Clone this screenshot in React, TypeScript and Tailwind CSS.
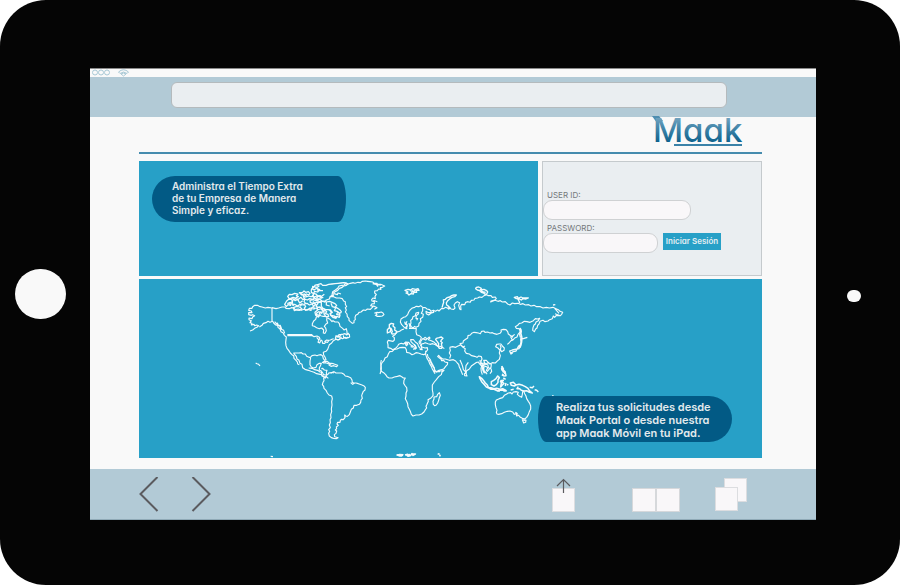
import React from "react";

const typeface = "font-[Inter,'Liberation_Sans',sans-serif] [font-feature-settings:'cv11']";

/* Coastlines are traced on a grid three times finer than the panel. */
function WorldMap() {
  return (
    <svg
      viewBox="-303 12 1869 537"
      className="block w-full bg-[#27a0c7]"
      role="img"
      aria-label="Mapa del mundo"
      fill="none"
      stroke="#f4fbfd"
      strokeWidth="3.4"
      strokeLinejoin="round"
    >
      {/* North America */}
      <g>
        <path d="M96 99l-12-2-8 2-10-3-8-2-6-3-8 0-6 4-2 5-8 0-2 6 8 2 2 5-10 0 0 6 8 2 4-2 6 3-6 4-2 5-9-2 0 5 7 3-4 6 6 2-2 5 8-2 2 4 6-2 6 2-4 4-8 4-6 5-8 3m28-12l8-5 4-6 8-2 6-4 6 3 8-3 3 5 6 6 6 1 1 6 6 5 3 8 6 3 4 8 6 5-1 8-1 8 1 10 3 8 5 6 5 8 5 5 5 3 1 8 6 6 4 5 1 6 5 2" />
        <path d="M96 99v40M142 179h75M142 182h77M96 98l12 3 8-2 10-3 9 0 3 4 10 1 6-3 8 1 3 5 10-2 9 4 8-3 10 2 8-6 9 3 10-3 5 5 9-3 5 7" />
        <path d="M104 140l8 10 8 4 2 8 9 4 3 9M107 146l5-2 4 8 5-1 4 11M161 235l8 9 2 8 6 4 3 9 6 3 2 10 7 5 10 3 8 3 9 3 8 4 10 2 8 3 5 6 5 3M160 234l17 0 7-1 5 4 7 0 4 7 7 3 4 0 5-5 9-2 6 2 5-2 7-1 5 4 2 8 4 5 4-2-3-8-4-6-1-8 8-3 5-6 3-8 2-6 7-5 5-7 8-4 6 2 8-4" />
        <path d="M212 248l-2 10 0 11 4 7 6 3 8-2 3-8 7-4 6 0-3 8-3 5 0 7 7 4-1 7 2 7 6 3 7-1 6 5" />
        <path d="M246 263l7-4 8 0 7 5 12 2 13 5-3 4-9-3-8 2-6-4 6-3-8-1-8-3-8 1" />
        <path d="M216 181l6 4 9-2 7 4 2 5-5 1-5-6m8 5l-4 10 5 2 4-9 3 2 2 8 6 0 3-4 6 1 3-5-6-2-7 5m10-4l8-1 5-2 5-2" />
        <path d="M238 122l-9 4-2 7-6 5-4 8 0 6 6 2 7 4 8 3 7-2 6 6-1 9 5 1 4-8-2-8-4-5 5-7 5-3-3-9 1-8-6-3-7 0-6-2-4-6 5-6 3 6" />
        <path d="M262 129l8 4 6 7 3-3 6 4 9 0 4 5 2 8 8 6 4 5 7-4 2 9 0 7 7 1 1 8-6 3-8-2-7 4-7-2-4 5-6 0-5-4 2-8 4 2 5-5 10-1 8-2 5 4 6-6m-34 11l8-2 6-6m-17 9l16 1m5-6l1 7 8 2 5-4" />
      </g>
      {/* Arctic archipelago */}
      <g strokeWidth="3.8">
        <path d="M140 78l7-6 8 1 2 7-8 5 3 6-8-2-5 6-5-7zM147 70l-4-6 5-6 8 1 8-4 10 2-5 5 6 3-8 4-8-2-8 4zM158 76l8-5 9 2 8-6 5 6 7-1-3 8 5 5-7 5-9-2-9 5-8-5-4 3-3-9zM160 98l10-4 9 2 7 6-8 4-9-1-6 2zM178 53l9 0 5-5 5 4 8-2 5 5-4 5-7-3-8 4-7-2zM190 63l6 3 10-3 6 2 8 0 4 4-6 4-9-2-7 4-9-3zM210 76l9-2 9 3 10-5 7 5-4 5-11 0-8 3-11-2zM192 87l9-2 7 5 9-3 4 8-7 4-1 7-9-3-7 3-4-7 4-4z" />
        <path d="M226 71l-7-7 2-8-7-4 0-8 6-6 6-8 9-2 8-2 5 5 10 0 8-3 10-1 9-1 9-1 9-1 8-1 8 1 5 3-5 4-8 2-6 5-7 2-5 6-6 3-8 6 1 6-9 3-3 8-9 3-5 6-9-3-6 3zM214 40l8 5 8-5 9 4-6 7-9-2-3 6 9 3 2 6 9-2 5 6-6 5-9-2M218 40l0-6 7 2 7 1 5-4-7-3m1 15l9 2 9 0m-33 13l7 6 10-4 9 5 8 1M227 71l9-8 9 1 8-6M219 79l8 9-6 5 2 10M230 79l4 6-6 8 7 6M182 52l3 7 8-2 9 9M142 86l9-4 8 9M156 68l9 9 8-4 6 11 9-7m-1 7l-6 10" />
        <path d="M244 80l8-2 7 3 10-2 9 4 7 3 5 5-4 5 7 4 6 4 5 6-2 4-6-1 4 7-2 7-7-3-3 6-7-2 3-5-10-2-4-5 7-4-5-7-8-1-8-1-8-4-4-6zM232 97l8-1 7 6 2 8-6 4-7-4-6 4 0 5 9 2-4 5-8-5-2-9 7-6zM252 103l8 7-4 6 8 2 2 7-9-1-5-7zM259 81l0 9 10 3m4-8l4 10 10 3-4 9 11 3-4 8 10 3M267 104l7 7-3 9 9 8 9-4" />
      </g>
      {/* Greenland and Iceland */}
      <path d="M278 50l8-5 7-5 4-7 9-2 7-1 2-4 10 1 6-2 9-2 5 2 9-3 7 1 6-4 9-1 7 1 7 1 8 1 5 4 8 0 2 3 9 0 7 3 5 2-7 4-6 1 2 5-7-1-4 5-8 1 0 6 5 4-4 6 1 7-7-2-4 5 1 4 7 2 0 6-8 1-3 5 8 2-6 6-3 3-9-1-5 4-7-1-7 6-6 1-4 6-6 3-2 6 1 7-4 3 0 6-5 2-6-5-4-4 0-6-5-5-1-8-5-6 3-6-3-7 4-3-4-7 0-8-5-2-4-7-8-2-10 0-8-4-7 0 2-6zM398 26l16 4 9 0m-14-1l5 6m-14 41l12 4m-12 12l11 6-8 5M282 56l10 3 2-5 9 3M404 114l7-2 5 1 8-2 5 3 3 5-5 4-8 1-8 0-5-3 5-2-3-5z" />
      {/* South America */}
      <g transform="translate(0 255)">
        <path d="M206 24l10 1 8 4 9 2 7 5 7 1 4 7 6 1 6-1 3-5 8-1 8-3 6 4 8 0 9 0 7 4 4 5 9 2 7 3 4 7 1 7 4 2 7 0 7 2 9 3 7 3 5 5-1 8-5 4-3 7-2 6 2 8-4 5-1 7-4 6-8 3-8 0-2 8-6 4-3 8-3 8-6 5-5-1-3-3 1 8-5 6-6-1-3 3-1 6-7 0-2 5 4 4-6 5 1 5-4 4 4 3-2 7-5 4 1 6 6 2 4 1-5 3-8-1-7-2-6-5-2-8 3-6-3-5 5-6-3-8 3-7-1-9 3-6-1-9 3-9-1-8 2-12-1-10 2-9-2-8-8-3-5-6-4-8-6-6-1-6-4-5 2-7 3-5-1-7 7-4 2-7-1-7 2-6-8-1-5-5-4 1M332 68l6 5 6-4m-65-35l1 6m-7-3l3 3" />
        <path d="M47 9l4 2 5 2 4 5M92 289l7 1M470 285l9-2 10 1-2 3-9 1m21-1l9-4 2 4-7 2" />
      </g>
      {/* Europe and Asia */}
      <g transform="translate(420 0)">
        <path d="M75 46l9-3 8 2 5-4 10 2 7-2 3 5-8 0 1 6-8-1-2 6-7-1-6 4-5-5-4-1 6-3zM91 47l8 3 8-5m-12 10l3-9" strokeWidth="4" />
        <path d="M76 160L70 154 65 149 61 141 63 132 71 127 77 125 83 119 86 111 91 104 97 99 104 97 109 94 116 95 122 92 128 97 136 98 141 102 149 104 153 109 160 106 161 112 154 114 146 120 139 116 138 109 145 113 157 113M160 106L166 109 173 105 177 108 184 101 190 101 197 97 203 100 209 97 213 102 221 103 225 99 222 90 226 84 232 80 239 83 236 91 239 102 243 104 242 93 245 88 254 89 257 82 264 80 270 82 274 76 282 75 285 70 293 69 298 66 306 67 312 62 320 59 324 62 333 62 337 67 346 66 349 71 344 75 333 78 332 81 345 76 354 79 361 77 367 81 376 80 383 87 390 90 397 84 404 86 414 85 421 88 429 86 436 90 446 89 453 93 462 91 470 95 481 95 489 99 499 97 508 99 519 97 528 101 535 104 540 109 548 112 545 118 541 122 533 119 525 116M524 100L532 109 537 115M541 122L529 121 524 127 520 123 517 131 509 134 504 138 495 140 489 136 480 139 477 147 473 151 471 159 467 162 463 170 458 166 459 158 462 150 466 147 468 141 475 137 479 130 473 132 466 131 460 137 450 142 441 140 433 139 425 144 418 145 413 151 406 155 409 160 416 161 423 164 422 169 414 178 411 186 404 189 400 194 393 197 387 204 382 208" />
        <path d="M76 160l5-4 1-6-4-5 3-6M76 160l6 1M128 98l0 9-4 8 6 3-2 9-7 4 2 8-6 6-1 8-8 4-4-3-5 5-5-4-3-6 2-5-1-8 5-4 2-7 7-3 2-8 8-2-1 5-6 5-1 8 5 1-3 5M74 140l2 8 6 2-6 9m11-15l2 9 2 6M87 160l10 0 12 1-1 9 2 9 8 3 6 5-2 7-5 7 3 6" />
        <path d="M72 162l-8 3-5 4-9 3-5 7-7 5 5 4 0 7-4 4-14-3-3 5 2 8 0 9 8 2 6 4 9-4 6-7 3-5 8-3 7 2 6-6 9 1 5 7 6 3 6 5-2 6 8-3-3-9-8-6-5-5-1-6 8 0 6 7 7 5 2 6 4 7 7 1-3-8 2-5 7-2 4-2 8 3 6 2 8-2 9 3 6 4 8 1 8 4 4 3" />
        <path d="M122 206l0-7 6-8 9 4 5-4 6-5 2 3-5 5 9 3 9 5 5 5M120 208l6 8 9 3 7-1 1 6-5 7M130 192l5-5 6 4M171 206l-3 4 9 7" />
        <path d="M169 190l8-2 7-2 5 4-5 5-2 4 5 4-3 3 2 9-1 5-7 0-3-6 1-8-4-6-5-6zM28 149l6-4 7 2-2 6 6 5-1 7 7 5-4 6-11 1-2-4 3-3-2-6-2-4-5-2zM22 164l5-5 5 2-1 9-9 4zM76 205l5-2 2 5-4 4zM92 215l7 1m3-8l6 9-3 6m14 0l9 1" strokeWidth="4" />
        <path d="M0 297l3-9 1-8-1-9 3-8 6-6 3-8 7-4 3-8 4-7 8-1 6-6 8-1 8-4 9-1 8 1 3 6 1 8 9 2 7 5 6-2 6-4 7 1 8 3 8 2 6-3 0-9M135 235l3 6 3 9 5 8 3 8 5 8 3 8 5 9 3 5M142 237l2 9 7 8 3 8 5 9 4 8 0 10 5 2 9-5 8-2 7-3 5-7 5-5 1-6-8-2-4-5-6 1-2-5-6-4-4-3 3-4 5 6 7 5 8 0 12 4 12-2 7 4 5 6 4 4 2 8 3 6 4 10 3 7" />
        <path d="M209 217L211 226 208 234 212 241 209 250M209 217L218 215 227 217 234 213 242 210 240 206 249 204 250 198 257 193 263 189 264 182 271 180 275 175 282 172 289 173 295 174 301 176 305 169 312 168 315 172 323 171 330 174 337 173 343 176 351 178 360 175 364 170 363 165 370 163 378 164 383 170 385 177 392 182 398 184 394 191 398 195" />
        <path d="M243 211l6 6 7 4-2 7 5 7 9 2 7 5 9 2 7 3 5-4 8 2 2 7-3 7 1 7 9-2 6 3 6-5 4 5 8-4 9 1 7-7 5-4 3-11-3-8 2-8-5-6-8-5 3-7 8-1 5 0 4 6 6 6-1 7-7 4-4-7 2-7-3-6M242 209l7 7 6-3M390 187l8-4 6-5" />
        <path d="M421 160l3 9-1 7 3 11-5-1-2-8 2-7-2-8zM421 189l9 2 12-4m-20 4l1 10-2 10-4 10-6 1-3 6-8 2-8 4-3-6 8-3 7-2 7-1 4-7 4-5M426 192l-1 10-2 9-3 7M390 230l3 7 5-4" strokeWidth="4" />
        <path d="M186 98l2-7 3-9-1-7 6-2 5-5 8-2 5-4 8-2 7 0-5 5-8 2-6 4-7 6-4 7 1 6 6 4 4 6-6 2M289 37l7-1 7 3 2 5 7-1 8 4 3 4-3 6-5 1-4-4-7-2-5-5-7-2-5-4zM300 42l8 8 9 2M403 67l9-2 3 5 8-4 6 3 16 0-7 3-10-1-4 4-8-4-7 0zM412 70l5 8 2 6M519 90l7-1" strokeWidth="4" />
        <path d="M257 297l3-10 8-5 7-10 13-9 7-2 3 5 7 7-2 8 1 9 3 9M307 266l3 6 7-5 7 3 1 8 8 3 2 8-5 7M310 272l-3 8 3 10 8 2 3 6M367 275l4 7-4 5-3-6zM172 290l8 0M187 288l4 0" />
      </g>
      {/* Africa, South-East Asia and Australia */}
      <g transform="translate(420 255)">
        <path d="M4 0l-2 9 1 9-1 9 2 7 7 4 6 6 4 6 6 4 9 0 7-3 9-2 8-2 5 3 5 4 6 0-4 7-1 9 5 8 4 5 1 9-3 7 0 9-2 8 4 8 3 7 1 9 5 10 3 7 2 6 5 5 9-3 9 0 8-3 7-6 4-7 4-5-2-5 3-6 4-9-1-5 9-5 6-7 0-8-2-9 0-8 0-7 6-9 6-7 7-9 8-6 2-8 6-5-8 2-7 0-7 3-5-5-3-8-5-6-4-9-5-9" />
        <path d="M178 98l3 8-3 7-2 8-3 8-4 6-5 2-4-4-1-9 3-7 0-6 8-1 3-7zM240 0l5 11 3 9 2 9 6 6 3 8 2 5-7-1-1-5 5-5-1-10 1-10 7-10" />
        <path d="M300 0l1 10 4 8 5 5 0 9 3 8m-11-25l8 2 4-9-3-7 8 0 7 8 8 4-1 9-6 6-5 6-3-3 5-8-7-4-6 3 1 9 5 9" />
        <path d="M298 50l7 5 6 7 5 7 6 6 4 9-7-3-7-8-7-8-5-9zM324 83l9 0 9 3 8-1 10 3 8-2 10 5-8 0-10-1-8 2-10-4-9 0zM334 65l7-4 7-5 5-8 5 5-4 7 0 7-5 7-7 4-8-4zM365 18l4 9 0 8 7 4 2 8-6 1-4-5-1 5m1-20l8 8-2 7m-9-16l7 10M361 62l9-1-5 5 7 4-5 5-5 6 2-12-3-7m17 7l-2 9m-6-24l7 4" strokeWidth="4.6" />
        <path d="M391 69l9-2 8 8-5 3-9-2zM408 75l9-2 11 3 8 4 8 5 4 7 9 7-9-2-8-5-9 1-7-2-5-5-8 0 4-6M449 82l8 1 5-5m2 11l6 2 5 5M384 72l-2 4M352 93l8 0m10 0l10 0m12-3l9-2" strokeWidth="4.5" />
        <path d="M346 126L349 120 358 116 368 113 373 106 379 103 385 99 392 98 396 102 400 96 408 95 415 97 412 103 419 109 425 112 427 103 428 95 431 93 434 101 438 108 440 116 445 124 449 130 452 138 452 147 448 155 445 164 440 172 434 177 427 175 420 171 416 166 410 168 409 161 403 163 398 156 390 153 382 154 373 157 365 161 356 163 351 162 349 157 351 151 348 143 346 134zM427 179l6 2 5-1-1 7-6 2z" />
        <path d="M406 157l5 4-1 5M50 284l8 3 9-2m8 0l8-2 0 5 9-2 4-5 3 5 7-4-7 0-6 0m-36 3l9 3M173 281l6 2m-1 5l4-2M516 108l5 0" strokeWidth="5" />
      </g>
    </svg>
  );
}

function Logo() {
  return (
    <svg width="92" height="32" viewBox="0 0 92 32" role="img" aria-label="Maak" className="overflow-visible">
      <defs>
        <linearGradient id="ink" gradientUnits="userSpaceOnUse" x1="0" y1="0" x2="0" y2="27">
          <stop offset="0" stopColor="#76a5c0" />
          <stop offset="0.3" stopColor="#4f8eb0" />
          <stop offset="1" stopColor="#075d89" />
        </linearGradient>
      </defs>
      <path d="M0-1h7l4 5-6 2z" fill="#4f8eb0" />
      <text
        x="1"
        y="25"
        fontSize="33"
        fontWeight="500"
        fill="url(#ink)"
        className="font-[Inter,'Liberation_Sans',sans-serif] [font-feature-settings:'cv11']"
      >
        Maak
      </text>
      <path d="M22 28h68" stroke="#3a82a8" strokeWidth="2" />
    </svg>
  );
}

function StatusBar() {
  return (
    <div className="flex h-[9px] items-center border-t border-[#8a8a8a] bg-[#f9f9f9] pl-[2px]">
      <svg width="38" height="8" viewBox="0 0 38 8" fill="none" stroke="#a9c9d6" strokeWidth="1" aria-hidden="true">
        <circle cx="3" cy="3.5" r="2.5" />
        <circle cx="9" cy="3.5" r="2.5" />
        <circle cx="15" cy="3.5" r="2.5" />
        <path d="M26.500 3q5-4.500 10 0l-1.500 1.500q-3.500-3-7 0zM29 5q2.500-2 5 0l-2.500 2z" />
      </svg>
    </div>
  );
}

export default function App() {
  return (
    <div className={`${typeface} bg-white`}>
      <div className="flex items-center rounded-[46px] bg-[#050505] pt-[68px] pb-[65px]">
        <div className="flex w-[90px] shrink-0 pl-[15px]">
          <button type="button" aria-label="Inicio" className="h-[50px] w-[51px] rounded-full bg-[#f9f9f9]" />
        </div>

        <div className="min-w-0 flex-1 bg-[#f9f9f9]">
          <StatusBar />
          <div className="flex h-10 items-center bg-[#b2cad6] pr-[89px] pb-1 pl-[81px]">
            <input
              type="text"
              aria-label="Dirección"
              className="h-[26px] w-full rounded-md border border-[#b4babd] bg-[#eaeef1] px-2 text-xs outline-none"
            />
          </div>

          <main className="pr-[54px] pb-[11px] pl-[49px]">
            <header className="flex h-[37px] justify-end border-b-2 border-[#468cae] pr-[18px]">
              <Logo />
            </header>

            <div className="mt-[7px] flex gap-1">
              <section className="flex-1 bg-[#27a0c7] pt-[15px] pl-[13px]">
                <p className="flex h-[46px] w-[194px] items-center rounded-[23px_8px_8px_23px/23px] bg-[#025a85] pb-0.5 pl-5 text-[10px] leading-[12px] font-semibold text-[#e3eaed]">
                  Administra el Tiempo Extra
                  <br />
                  de tu Empresa de Manera
                  <br />
                  Simple y eficaz.
                </p>
              </section>

              <form
                onSubmit={(e: React.FormEvent) => e.preventDefault()}
                className="h-[115px] w-[220px] border border-[#c5cacd] bg-[#eaeef1] pt-[29px]"
              >
                <label htmlFor="user" className="block pl-1 text-[8px] leading-[9px] text-[#74787b]">
                  USER ID:
                </label>
                <input
                  id="user"
                  type="text"
                  className="block h-5 w-[148px] rounded-[9px] border border-[#cfd1d3] bg-[#f9f7f9] px-2 text-[10px] outline-none"
                />
                <label htmlFor="pass" className="mt-1 block pl-1 text-[8px] leading-[9px] text-[#74787b]">
                  PASSWORD:
                </label>
                <div className="flex gap-[5px]">
                  <input
                    id="pass"
                    type="password"
                    className="block h-5 w-[115px] rounded-[9px] border border-[#cfd1d3] bg-[#f9f7f9] px-2 text-[10px] outline-none"
                  />
                  <button
                    type="submit"
                    className="h-[17px] w-[58px] bg-[#27a0c7] text-[8px] leading-[17px] font-semibold whitespace-nowrap text-[#e3eef2]"
                  >
                    Iniciar Sesión
                  </button>
                </div>
              </form>
            </div>

            <section className="relative mt-[3px]">
              <WorldMap />
              <p className="absolute right-[30px] bottom-4 flex h-[46px] w-[194px] items-center rounded-[8px_23px_23px_8px/23px] bg-[#025a85] pt-0.5 pl-[18px] text-[11px] leading-[13px] font-semibold text-[#e3eaed]">
                Realiza tus solicitudes desde
                <br />
                Maak Portal o desde nuestra
                <br />
                app Maak Móvil en tu iPad.
              </p>
            </section>
          </main>

          <footer className="flex h-[51px] items-start border-b border-[#8fa9b6] bg-[#b2cad6] pt-2 pr-[68px] pl-[49px]">
            <div className="flex gap-8">
              <button type="button" aria-label="Atrás">
                <svg width="20" height="36" viewBox="0 0 20 36" fill="none" stroke="#5b5b5f" strokeWidth="2">
                  <path d="M18.500 0L1.500 17l17 17" />
                </svg>
              </button>
              <button type="button" aria-label="Adelante">
                <svg width="20" height="36" viewBox="0 0 20 36" fill="none" stroke="#5b5b5f" strokeWidth="2">
                  <path d="M1.500 0l17 17-17 17" />
                </svg>
              </button>
            </div>
            <div className="ml-auto flex">
              <button type="button" aria-label="Compartir" className="mr-14">
                <svg width="25" height="36" viewBox="0 0 25 36" fill="none" stroke="#dcdde0">
                  <rect x="1.500" y="11.500" width="22" height="23" fill="#f9f7f9" />
                  <path d="M12.500 3v13M6 9l6.500-6.500L19 9" stroke="#5b5b5f" strokeWidth="1.200" />
                </svg>
              </button>
              <button type="button" aria-label="Marcadores" className="mr-[34px]">
                <svg width="48" height="36" viewBox="0 0 48 36" fill="#f9f7f9" stroke="#d6d8db">
                  <rect x="0.500" y="11.500" width="23" height="23" />
                  <rect x="24.500" y="11.500" width="23" height="23" />
                </svg>
              </button>
              <button type="button" aria-label="Pestañas">
                <svg width="34" height="36" viewBox="0 0 34 36" fill="#f9f7f9" stroke="#dcdde0">
                  <rect x="10.500" y="1.500" width="22" height="23" />
                  <rect x="1.500" y="10.500" width="22" height="23" />
                </svg>
              </button>
            </div>
          </footer>
        </div>

        <div className="flex w-[84px] shrink-0 justify-center pt-1 pr-2">
          <span className="h-3 w-[14px] rounded-full bg-[#f9f9f9]" />
        </div>
      </div>
    </div>
  );
}
